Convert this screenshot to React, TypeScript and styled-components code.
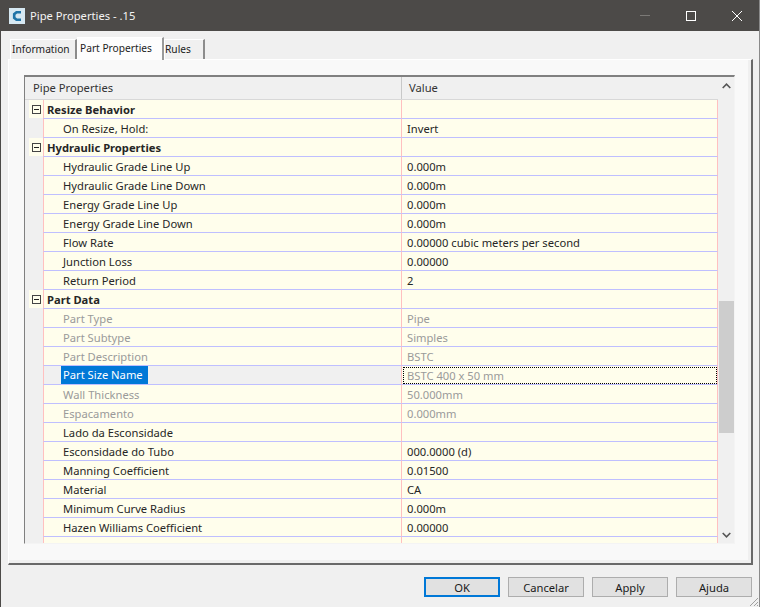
import React from "react";
import styled, { createGlobalStyle } from "styled-components";

const GlobalStyle = createGlobalStyle`
  html, body {
    margin: 0;
    padding: 0;
    background: #f0f0f0;
  }
  * {
    box-sizing: border-box;
  }
`;

const Window = styled.div`
  width: 760px;
  height: 607px;
  display: flex;
  flex-direction: column;
  position: relative;
  overflow: hidden;
  background: #f0f0f0;
  border-left: 1px solid #4c4a48;
  border-right: 1px solid #8a8a8a;
  font-family: "Noto Sans", "Open Sans", sans-serif;
  font-size: 11.2px;
  color: #222;
`;

const TitleBar = styled.div`
  height: 31px;
  flex: none;
  margin-left: -1px;
  margin-right: -1px;
  background: #4c4a48;
  color: #fff;
  display: flex;
  align-items: center;
  padding-left: 9px;
`;

const TitleText = styled.span`
  margin-left: 5px;
  font-size: 11.2px;
  color: #f4f4f4;
`;

const WindowButton = styled.div`
  width: 46px;
  height: 31px;
  display: flex;
  align-items: center;
  justify-content: center;
`;

const WindowButtons = styled.div`
  margin-left: auto;
  display: flex;
`;

const Tabs = styled.div`
  height: 28px;
  flex: none;
  display: flex;
  align-items: flex-end;
  padding-left: 9px;
  font-size: 10.2px;
`;

const Tab = styled.div<{ $active?: boolean; $width: number; $inset: number }>`
  width: ${(p) => p.$width}px;
  height: ${(p) => (p.$active ? 23 : 20)}px;
  margin-bottom: ${(p) => (p.$active ? -1 : 0)}px;
  position: relative;
  z-index: ${(p) => (p.$active ? 2 : 1)};
  display: flex;
  align-items: center;
  white-space: nowrap;
  padding: 0 0 ${(p) => (p.$active ? 3 : 2)}px ${(p) => p.$inset}px;
  background: ${(p) => (p.$active ? "#fdfdfd" : "#f0f0f0")};
  border-top: 1px solid #ffffff;
  border-left: 1px solid #ffffff;
  border-right: 2px solid ${(p) => (p.$active ? "#9a9a9a" : "#8c8c8c")};
  color: #222;
`;

const TabPanel = styled.div`
  width: 745px;
  height: 506px;
  flex: none;
  margin-left: 7px;
  padding: 15px 16px 20px 15px;
  background: #f9f9f9;
  border-top: 1px solid #ffffff;
  border-left: 1px solid #ffffff;
  border-right: 2px solid #696969;
  border-bottom: 2px solid #696969;
  box-shadow: inset -3px -3px 0 #f0f0f0;
`;

const PropertyBox = styled.div`
  height: 469px;
  display: flex;
  background: #f0f0f0;
  border-top: 2px solid #808080;
  border-left: 1px solid #808080;
  border-right: 1px solid #f4f4f4;
  border-bottom: 1px solid #f4f4f4;
  overflow: hidden;
`;

const GridArea = styled.div`
  width: 693px;
  flex: none;
  overflow: hidden;
`;

const HeaderRow = styled.div`
  height: 23px;
  display: flex;
  align-items: center;
  background: #f0f0f0;
  color: #333;
  border-bottom: 1px solid #d8d8d8;
`;

const HeaderName = styled.div`
  width: 377px;
  flex: none;
  height: 100%;
  display: flex;
  align-items: center;
  padding: 0 0 2px 8px;
  border-right: 1px solid #c8c8c8;
`;

const HeaderValue = styled.div`
  padding: 0 0 2px 7px;
`;

const Row = styled.div<{ $category?: boolean }>`
  height: 19px;
  display: flex;
  padding-left: ${(p) => (p.$category ? 4 : 18)}px;
`;

const ExpandCell = styled.div`
  width: 14px;
  flex: none;
  display: flex;
  align-items: center;
  justify-content: center;
  background: #fffeec;
  border-bottom: 1px solid #f0f0f0;
`;

const ExpandIcon = styled.span`
  width: 9px;
  height: 9px;
  position: relative;
  border: 1px solid #444;
  &::after {
    content: "";
    position: absolute;
    left: 1px;
    top: 3px;
    width: 5px;
    height: 1px;
    background: #222;
  }
`;

const NameCell = styled.div<{ $category?: boolean; $disabled?: boolean; $selected?: boolean }>`
  width: 359px;
  flex: none;
  display: flex;
  align-items: center;
  white-space: nowrap;
  overflow: hidden;
  padding-left: ${(p) => (p.$category ? 3 : 19)}px;
  background: ${(p) => (p.$selected ? "#f0f0f0" : "#fffeec")};
  border-left: 1px solid #ffc0c0;
  border-right: 1px solid #ffc0c0;
  border-bottom: 1px solid #bfbfff;
  font-weight: ${(p) => (p.$category ? 700 : 400)};
  color: ${(p) => (p.$disabled ? "#9a9a9a" : "#262626")};
`;

const SelectedLabel = styled.span`
  margin-left: -2px;
  padding: 0 5px 0 2px;
  height: 18px;
  line-height: 18px;
  background: #0078d7;
  color: #fff;
`;

const ValueCell = styled.div<{ $disabled?: boolean; $focused?: boolean }>`
  flex: 1;
  position: relative;
  display: flex;
  align-items: center;
  white-space: nowrap;
  padding-left: 5px;
  background: #fffeec;
  border-right: 1px solid #ffc0c0;
  border-bottom: 1px solid #bfbfff;
  color: ${(p) => (p.$disabled ? "#9a9a9a" : "#262626")};
  ${(p) => (p.$focused ? "outline: 1px dotted #000; outline-offset: -2px;" : "")}
`;

const Scrollbar = styled.div`
  width: 17px;
  flex: none;
  display: flex;
  flex-direction: column;
  background: #f0f0f0;
`;

const ScrollArrow = styled.div`
  height: 17px;
  flex: none;
  display: flex;
  align-items: center;
  justify-content: center;
`;

const ScrollTrack = styled.div`
  flex: 1;
  display: flex;
  flex-direction: column;
  padding: 207px 1px 0;
`;

const ScrollThumb = styled.div`
  height: 132px;
  background: #cdcdcd;
`;

const Footer = styled.div`
  flex: 1;
  display: flex;
  justify-content: flex-end;
  gap: 8px;
  padding: 12px 7px 0 0;
`;

const DialogButton = styled.div<{ $primary?: boolean }>`
  width: 76px;
  height: 20px;
  display: flex;
  align-items: center;
  justify-content: center;
  background: #e1e1e1;
  border: ${(p) => (p.$primary ? "2px solid #0078d7" : "1px solid #adadad")};
  color: #1a1a1a;
`;

const Grip = styled.svg`
  position: absolute;
  right: 0;
  bottom: 0;
`;

type Prop = {
  name: string;
  value?: string;
  category?: boolean;
  disabled?: boolean;
  selected?: boolean;
};

const rows: Prop[] = [
  { name: "Resize Behavior", category: true },
  { name: "On Resize, Hold:", value: "Invert" },
  { name: "Hydraulic Properties", category: true },
  { name: "Hydraulic Grade Line Up", value: "0.000m" },
  { name: "Hydraulic Grade Line Down", value: "0.000m" },
  { name: "Energy Grade Line Up", value: "0.000m" },
  { name: "Energy Grade Line Down", value: "0.000m" },
  { name: "Flow Rate", value: "0.00000 cubic meters per second" },
  { name: "Junction Loss", value: "0.00000" },
  { name: "Return Period", value: "2" },
  { name: "Part Data", category: true },
  { name: "Part Type", value: "Pipe", disabled: true },
  { name: "Part Subtype", value: "Simples", disabled: true },
  { name: "Part Description", value: "BSTC", disabled: true },
  { name: "Part Size Name", value: "BSTC 400 x 50 mm", disabled: true, selected: true },
  { name: "Wall Thickness", value: "50.000mm", disabled: true },
  { name: "Espacamento", value: "0.000mm", disabled: true },
  { name: "Lado da Esconsidade" },
  { name: "Esconsidade do Tubo", value: "000.0000 (d)" },
  { name: "Manning Coefficient", value: "0.01500" },
  { name: "Material", value: "CA" },
  { name: "Minimum Curve Radius", value: "0.000m" },
  { name: "Hazen Williams Coefficient", value: "0.00000" },
  { name: "Darcy Weisbach Factor", value: "0.00000" },
];

const App = () => (
  <>
    <GlobalStyle />
    <Window>
      <TitleBar>
        <svg width="16" height="16" viewBox="0 0 16 16">
          <rect width="16" height="16" fill="#d6e8f2" />
          <path d="M12 4.2H7.5L5.2 6.2v3.6L7.5 11.8H12" fill="none" stroke="#1f74a8" strokeWidth="2.6" />
        </svg>
        <TitleText>Pipe Properties - .15</TitleText>
        <WindowButtons>
          <WindowButton>
            <svg width="10" height="1"><rect width="10" height="1" fill="#7b7976" /></svg>
          </WindowButton>
          <WindowButton>
            <svg width="10" height="10"><rect x="0.5" y="0.5" width="9" height="9" fill="none" stroke="#fff" /></svg>
          </WindowButton>
          <WindowButton>
            <svg width="10" height="10"><path d="M0 0L10 10M10 0L0 10" stroke="#fff" strokeWidth="1" /></svg>
          </WindowButton>
        </WindowButtons>
      </TitleBar>
      <Tabs>
        <Tab $width={67} $inset={1}>Information</Tab>
        <Tab $width={87} $active $inset={2}>Part Properties</Tab>
        <Tab $width={41} $inset={0}>Rules</Tab>
      </Tabs>
      <TabPanel>
        <PropertyBox>
          <GridArea>
            <HeaderRow>
              <HeaderName>Pipe Properties</HeaderName>
              <HeaderValue>Value</HeaderValue>
            </HeaderRow>
            {rows.map((row) => (
              <Row key={row.name} $category={row.category}>
                {row.category && (
                  <ExpandCell>
                    <ExpandIcon />
                  </ExpandCell>
                )}
                <NameCell $category={row.category} $disabled={row.disabled} $selected={row.selected}>
                  {row.selected ? <SelectedLabel>{row.name}</SelectedLabel> : row.name}
                </NameCell>
                <ValueCell $disabled={row.disabled} $focused={row.selected}>
                  {row.value}
                </ValueCell>
              </Row>
            ))}
          </GridArea>
          <Scrollbar>
            <ScrollArrow>
              <svg width="9" height="6" viewBox="0 0 9 6"><path d="M0.7 5L4.5 1.2L8.3 5" fill="none" stroke="#555" strokeWidth="1.6" /></svg>
            </ScrollArrow>
            <ScrollTrack>
              <ScrollThumb />
            </ScrollTrack>
            <ScrollArrow>
              <svg width="9" height="6" viewBox="0 0 9 6"><path d="M0.7 1L4.5 4.8L8.3 1" fill="none" stroke="#555" strokeWidth="1.6" /></svg>
            </ScrollArrow>
          </Scrollbar>
        </PropertyBox>
      </TabPanel>
      <Footer>
        <DialogButton $primary>OK</DialogButton>
        <DialogButton>Cancelar</DialogButton>
        <DialogButton>Apply</DialogButton>
        <DialogButton>Ajuda</DialogButton>
      </Footer>
      <Grip width="12" height="12" viewBox="0 0 12 12">
        <path d="M11 3L3 11M11 7L7 11M11 10L10 11" stroke="#a0a0a0" strokeWidth="1" fill="none" />
      </Grip>
    </Window>
  </>
);

export default App;
